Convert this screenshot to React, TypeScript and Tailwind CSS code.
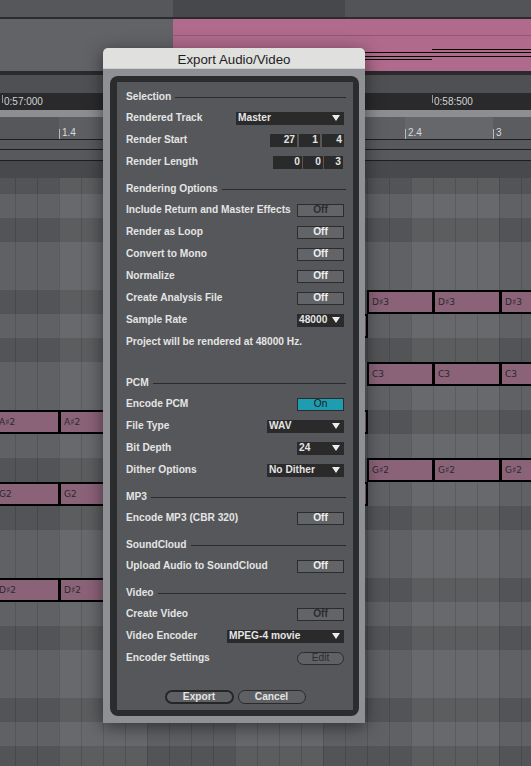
import React from "react";

type Note = { x: number; w: number; y: number; label: string };

const ROWS: boolean[] = [
  true, // G#3 partial
  false, // G3
  true, // F#3
  false, // F3
  false, // E3
  true, // D#3
  false, // D3
  true, // C#3
  false, // C3
  false, // B2
  true, // A#2
  false, // A2
  true, // G#2
  false, // G2
  true, // F#2
  false, // F2
  false, // E2
  true, // D#2
  false, // D2
  true, // C#2
  false, // C2
  false, // B1
  true, // A#1
  false, // A1
  true, // G#1
];

const NOTES: Note[] = [
  { x: 367, w: 67, y: 112, label: "D♯3" },
  { x: 433, w: 68, y: 112, label: "D♯3" },
  { x: 500, w: 68, y: 112, label: "D♯3" },
  { x: 280, w: 88, y: 136, label: "D3" },
  { x: 367, w: 67, y: 184, label: "C3" },
  { x: 433, w: 68, y: 184, label: "C3" },
  { x: 500, w: 68, y: 184, label: "C3" },
  { x: -6, w: 66, y: 232, label: "A♯2" },
  { x: 59, w: 309, y: 232, label: "A♯2" },
  { x: 367, w: 67, y: 280, label: "G♯2" },
  { x: 433, w: 68, y: 280, label: "G♯2" },
  { x: 500, w: 68, y: 280, label: "G♯2" },
  { x: -6, w: 66, y: 304, label: "G2" },
  { x: 59, w: 309, y: 304, label: "G2" },
  { x: -6, w: 66, y: 400, label: "D♯2" },
  { x: 59, w: 160, y: 400, label: "D♯2" },
];

const LINES = Array.from({ length: 24 }, (_, i) => 15 + i * 22);
const LIGHT_COLS = [59, 235, 411];

function Tri() {
  return (
    <svg width="8" height="6" viewBox="0 0 8 6" className="shrink-0">
      <polygon points="0,0 8,0 4,6" fill="#ececec" />
    </svg>
  );
}

function Drop({ w, value }: { w: string; value: string }) {
  return (
    <div className={`flex h-[13px] items-center justify-between bg-[#2a2a2b] pl-[2px] pr-[4px] leading-none ${w}`}>
      <span>{value}</span>
      <Tri />
    </div>
  );
}

function NumBox({ w, value }: { w: string; value: string }) {
  return (
    <div className={`flex h-[13px] items-center justify-end bg-[#2a2a2b] pr-[2px] leading-none ${w}`}>
      {value}
    </div>
  );
}

function Toggle({ on, dim }: { on?: boolean; dim?: boolean }) {
  if (on) {
    return (
      <div className="flex h-[13px] w-[47px] items-center justify-center border border-[#2c2c2c] bg-[#1e9db0] font-normal leading-none text-[#1a1a1a]">
        On
      </div>
    );
  }
  return (
    <div
      className={`flex h-[13px] w-[47px] items-center justify-center border border-[#2c2c2c] bg-[#626467] leading-none ${
        dim ? "text-[#2e2c31]" : "text-[#eeeeee]"
      }`}
    >
      Off
    </div>
  );
}

function Row({ label, children }: { label: string; children?: React.ReactNode }) {
  return (
    <div className="flex h-[22px] items-center justify-between">
      <span className="whitespace-nowrap">{label}</span>
      {children}
    </div>
  );
}

function Header({ label }: { label: string }) {
  return (
    <div className="-mr-[2px] flex h-[20px] items-center">
      <span className="whitespace-nowrap">{label}</span>
      <div className="ml-[4px] h-px flex-1 bg-[#2b2b2d]" />
    </div>
  );
}

function Dialog() {
  return (
    <div className="absolute left-[103px] top-[48px] flex w-[262px] flex-col overflow-hidden rounded-t-[5px] shadow-[0_4px_18px_rgba(0,0,0,0.5)]">
      <div className="flex h-[21px] items-center justify-center border-b border-[#c9ccd0] bg-[#e0e0de] pt-[3px] font-['Liberation_Sans',Arial,sans-serif] text-[13.3px] text-[#1e1e1e]">
        Export Audio/Video
      </div>
      <div className="bg-[#8e9093] pb-[7px] pl-[7px] pr-[6px] pt-[7px]">
        <div className="rounded-[8px] bg-[#2b2c2e] p-[6px] pl-[7px]">
          <div className="flex h-[628px] flex-col bg-[#55575a] px-[9px] pt-[5px] font-['Liberation_Sans',Arial,sans-serif] text-[10.2px] font-bold text-[#e4e4e4]">
            <Header label="Selection" />
            <Row label="Rendered Track">
              <Drop w="w-[108px]" value="Master" />
            </Row>
            <Row label="Render Start">
              <div className="flex gap-[2px]">
                <NumBox w="w-[27px]" value="27" />
                <NumBox w="w-[21px]" value="1" />
                <NumBox w="w-[22px]" value="4" />
              </div>
            </Row>
            <Row label="Render Length">
              <div className="mr-[1px] flex gap-[1px]">
                <NumBox w="w-[29px]" value="0" />
                <NumBox w="w-[20px]" value="0" />
                <NumBox w="w-[19px]" value="3" />
              </div>
            </Row>
            <div className="h-[6px]" />
            <Header label="Rendering Options" />
            <Row label="Include Return and Master Effects">
              <Toggle dim />
            </Row>
            <Row label="Render as Loop">
              <Toggle />
            </Row>
            <Row label="Convert to Mono">
              <Toggle />
            </Row>
            <Row label="Normalize">
              <Toggle />
            </Row>
            <Row label="Create Analysis File">
              <Toggle />
            </Row>
            <Row label="Sample Rate">
              <Drop w="w-[47px]" value="48000" />
            </Row>
            <Row label="Project will be rendered at 48000 Hz." />
            <div className="h-[20px]" />
            <Header label="PCM" />
            <Row label="Encode PCM">
              <Toggle on />
            </Row>
            <Row label="File Type">
              <Drop w="w-[77px]" value="WAV" />
            </Row>
            <Row label="Bit Depth">
              <Drop w="w-[47px]" value="24" />
            </Row>
            <Row label="Dither Options">
              <Drop w="w-[77px]" value="No Dither" />
            </Row>
            <div className="h-[6px]" />
            <Header label="MP3" />
            <Row label="Encode MP3 (CBR 320)">
              <Toggle />
            </Row>
            <div className="h-[6px]" />
            <Header label="SoundCloud" />
            <Row label="Upload Audio to SoundCloud">
              <Toggle />
            </Row>
            <div className="h-[6px]" />
            <Header label="Video" />
            <Row label="Create Video">
              <Toggle dim />
            </Row>
            <Row label="Video Encoder">
              <Drop w="w-[117px]" value="MPEG-4 movie" />
            </Row>
            <Row label="Encoder Settings">
              <div className="flex h-[13px] w-[47px] items-center justify-center rounded-full border border-[#2c2c2c] bg-[#5f6164] font-normal leading-none text-[#2e2c31]">
                Edit
              </div>
            </Row>
            <div className="h-[21px]" />
            <div className="flex justify-center gap-[4px]">
              <div className="flex h-[14px] w-[69px] items-center justify-center rounded-full border-2 border-[#262626] bg-[#5e6063] leading-none">
                Export
              </div>
              <div className="flex h-[14px] w-[68px] items-center justify-center rounded-full border border-[#2a2a2a] bg-[#5e6063] leading-none">
                Cancel
              </div>
            </div>
          </div>
        </div>
      </div>
    </div>
  );
}

export default function App() {
  return (
    <div className="relative h-[766px] w-[531px] overflow-hidden bg-[#5a5b5e] font-['Liberation_Sans',Arial,sans-serif]">
      {/* top header bands */}
      <div className="flex flex-col">
        <div className="flex h-[17px]">
          <div className="w-[173px] bg-[#56575a]" />
          <div className="w-[172px] bg-[#47484b]" />
          <div className="flex-1 bg-[#535457]" />
        </div>
        <div className="h-[2px] bg-[#2b2b2d]" />
        <div className="relative flex h-[52px]">
          <div className="w-[173px] bg-[#626367]" />
          <div className="flex flex-1 flex-col bg-[#b06a8c]">
            <div className="h-[16px]" />
            <div className="h-px bg-[#93567a]" />
          </div>
          <div className="absolute left-[360px] top-[33px] h-px w-[72px] bg-black" />
          <div className="absolute left-[360px] top-[37px] h-px w-[72px] bg-black" />
          <div className="absolute left-[360px] top-[40px] h-px w-[72px] bg-black" />
          <div className="absolute left-[432px] top-[30px] h-px w-[99px] bg-black" />
          <div className="absolute left-[432px] top-[33px] h-px w-[99px] bg-black" />
          <div className="absolute left-[432px] top-[37px] h-px w-[99px] bg-black" />
        </div>
        <div className="h-[4px] bg-[#2a2a2c]" />
        <div className="h-[18px] bg-[#4f5053]" />
        <div className="relative h-[17px] bg-[#2a2a2c] text-[10px] text-[#d2d2d2]">
          <div className="absolute left-[2px] top-[2px] h-[8px] w-px bg-[#9a9a9a]" />
          <span className="absolute left-[4px] top-[4px] leading-none">0:57:000</span>
          <div className="absolute left-[432px] top-[2px] h-[8px] w-px bg-[#9a9a9a]" />
          <span className="absolute left-[434px] top-[4px] leading-none">0:58:500</span>
        </div>
        <div className="h-[7px] bg-[#8c8e91]" />
        <div className="relative flex h-[22px] text-[10px] text-[#dadada]">
          <div className="w-[59px] bg-[#55575a]" />
          <div className="w-[346px] bg-[#5d5f62]" />
          <div className="w-[88px] bg-[#65676a]" />
          <div className="flex-1 bg-[#5a5c5f]" />
          <div className="absolute left-[59px] top-[12px] h-[10px] w-px bg-[#b8b8b8]" />
          <span className="absolute left-[62px] top-[11px] leading-none">1.4</span>
          <div className="absolute left-[405px] top-[12px] h-[10px] w-px bg-[#b8b8b8]" />
          <span className="absolute left-[408px] top-[11px] leading-none">2.4</span>
          <div className="absolute left-[493px] top-[12px] h-[10px] w-px bg-[#b8b8b8]" />
          <span className="absolute left-[496px] top-[11px] leading-none">3</span>
        </div>
        <div className="h-px bg-[#1e1e20]" />
        <div className="h-[9px] bg-[#57595c]" />
        <div className="h-px bg-[#1e1e20]" />
        <div className="h-[10px] bg-[#57595c]" />
        <div className="h-px bg-[#1e1e20]" />
        <div className="h-[17px] bg-[#48494c]" />
      </div>

      {/* piano roll grid */}
      <div className="relative">
        <div className="flex flex-col">
          {ROWS.map((black, i) => (
            <div
              key={i}
              className={`${i === 0 ? "h-[16px]" : "h-[24px]"} ${black ? "bg-[#525457]" : "bg-[#5f6165]"}`}
            />
          ))}
        </div>
        {LIGHT_COLS.map((x) => (
          <div key={x} className="absolute bottom-0 top-0 w-[88px] bg-white/[0.05]" style={{ left: x }} />
        ))}
        {LINES.map((x) => (
          <div key={x} className="absolute bottom-0 top-0 w-px bg-black/[0.12]" style={{ left: x }} />
        ))}
        {NOTES.map((n, i) => (
          <div
            key={i}
            className="absolute flex h-[24px] items-center border-2 border-black bg-[#8b6379] pl-[3px] text-[#2a2a2a]"
            style={{ left: n.x, top: n.y, width: n.w }}
          >
            <span className="pt-px font-['DejaVu_Sans',sans-serif] text-[9px]">{n.label}</span>
          </div>
        ))}
      </div>

      <Dialog />
    </div>
  );
}
